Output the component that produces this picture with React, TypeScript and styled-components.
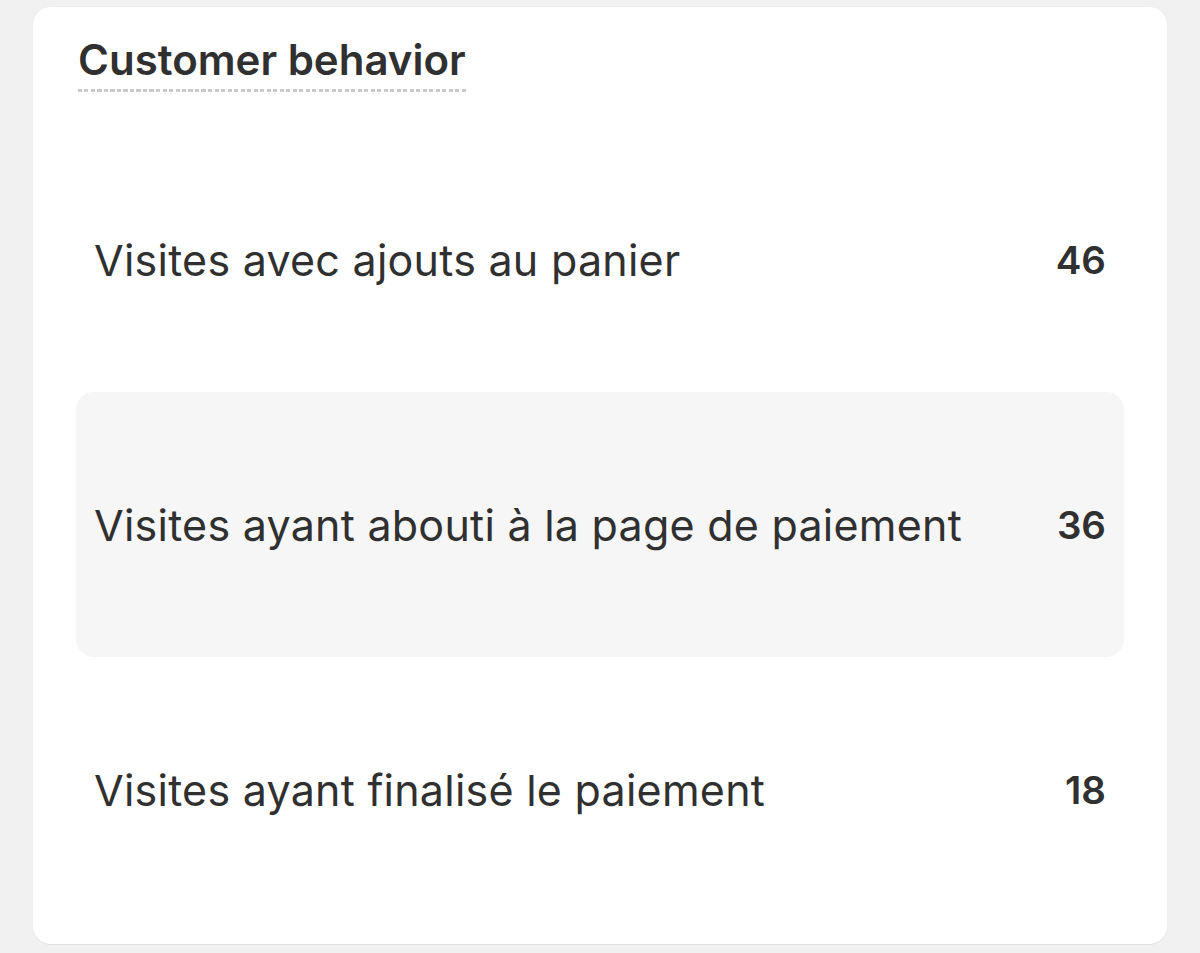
import React from "react";
import styled, { createGlobalStyle } from "styled-components";

const Global = createGlobalStyle`
  html, body { margin: 0; padding: 0; background: #f1f1f1; }
  body { font-family: Inter, "Noto Sans", sans-serif; color: #303030; }
`;

const Page = styled.div`
  padding: 7px 33px 9px 33px;
`;

const Card = styled.section`
  background: #ffffff;
  border-radius: 18px;
  padding: 0 43px 22px 43px;
  box-shadow: 0 1px 0 rgba(0,0,0,0.05), 0 0 0 1px rgba(0,0,0,0.012);
  height: 937px;
  box-sizing: border-box;
  display: flex;
  flex-direction: column;
`;

const Header = styled.div`
  height: 120px;
  padding-top: 28px;
  padding-left: 2px;
  box-sizing: border-box;
`;

const Title = styled.h2`
  position: relative;
  display: inline-block;
  margin: 0;
  font-size: 42px;
  font-weight: 600;
  line-height: 50px;
  letter-spacing: 0;
  color: #303030;
  padding-bottom: 7px;
  &::after {
    content: "";
    position: absolute;
    left: 0;
    right: 0;
    bottom: 0;
    height: 3px;
    background: repeating-linear-gradient(to right, #cacaca 0 4px, transparent 4px 6.5px);
  }
`;

const List = styled.div`
  display: flex;
  flex-direction: column;
`;

const Row = styled.div<{ $active?: boolean }>`
  height: 265px;
  display: flex;
  align-items: center;
  justify-content: space-between;
  padding: 0 18px;
  border-radius: 18px;
  background: ${(p) => (p.$active ? "#f6f6f6" : "transparent")};
`;

const Label = styled.span`
  font-size: 43px;
  letter-spacing: 0.25px;
  font-weight: 400;
  color: #303030;
`;

const Value = styled.span`
  font-size: 38.5px;
  font-weight: 600;
  color: #303030;
`;

const rows = [
  { label: "Visites avec ajouts au panier", value: "46" },
  { label: "Visites ayant abouti à la page de paiement", value: "36", active: true },
  { label: "Visites ayant finalisé le paiement", value: "18" },
];

export default function App() {
  return (
    <>
      <Global />
      <Page>
        <Card>
          <Header>
            <Title>Customer behavior</Title>
          </Header>
          <List>
            {rows.map((r) => (
              <Row key={r.label} $active={r.active}>
                <Label>{r.label}</Label>
                <Value>{r.value}</Value>
              </Row>
            ))}
          </List>
        </Card>
      </Page>
    </>
  );
}
